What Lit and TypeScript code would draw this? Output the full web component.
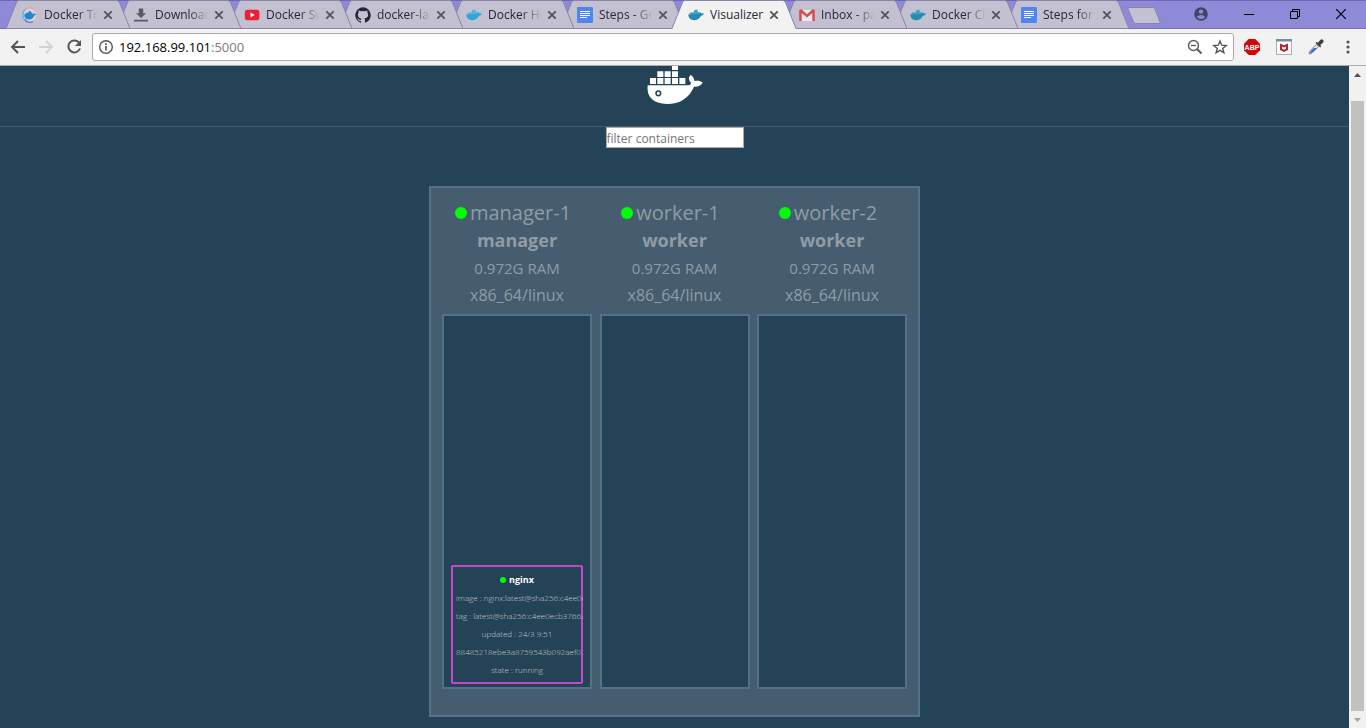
import { LitElement, html, svg, css } from "lit";
import { customElement, property, state } from "lit/decorators.js";
import { classMap } from "lit/directives/class-map.js";

interface Tab { icon: string; title: string; active?: boolean; }
interface Task { name: string; lines: string[]; }
interface SwarmNode { name: string; role: string; ram: string; platform: string; tasks: Task[]; }

const TABS: Tab[] = [
  { icon: "toolbox", title: "Docker Toolbox" },
  { icon: "download", title: "Download" },
  { icon: "youtube", title: "Docker Swarm" },
  { icon: "github", title: "docker-labs" },
  { icon: "whale", title: "Docker Hub" },
  { icon: "docs", title: "Steps - Google" },
  { icon: "whaledark", title: "Visualizer", active: true },
  { icon: "gmail", title: "Inbox - paul" },
  { icon: "whaledark", title: "Docker Cloud" },
  { icon: "docs", title: "Steps for docker" },
];

const NODES: SwarmNode[] = [
  {
    name: "manager-1", role: "manager", ram: "0.972G RAM", platform: "x86_64/linux",
    tasks: [{
      name: "nginx",
      lines: [
        "image : nginx:latest@sha256:c4ee0ecb376636",
        "tag : latest@sha256:c4ee0ecb376636",
        "updated : 24/3 9:51",
        "88485218ebe3a8759543b092aef07b",
        "state : running",
      ],
    }],
  },
  { name: "worker-1", role: "worker", ram: "0.972G RAM", platform: "x86_64/linux", tasks: [] },
  { name: "worker-2", role: "worker", ram: "0.972G RAM", platform: "x86_64/linux", tasks: [] },
];

const whale = (body: string, load: string) => svg`
  <path fill=${load} d="M6 3.300L9.300 2.600 9.800 5l1.200.3V8.500H1.800L1.500 5.800 6 5.200z"/>
  <path fill=${body} d="M.2 7.600L10.600 7c.9-.4 1.200-1.200.9-2.200 1 .4 1.500 1 1.600 1.700 1-.4 2-.3 2.800.2-.6 1.300-1.600 1.900-2.900 2-1.400 2.800-3.600 4.500-7 4.500C2.800 13.200.6 11.400.2 7.600z"/>`;

const ICONS: Record<string, unknown> = {
  toolbox: svg`
    <circle cx="8" cy="8" r="7.300" fill="#d3d5e2"/>
    <path d="M3 2.600A7.300 7.300 0 0 1 13.500 3.500" fill="none" stroke="#e8a08c" stroke-width="1.300"/>
    <path d="M13.500 3.500A7.300 7.300 0 0 1 11 14.700" fill="none" stroke="#e6b3a0" stroke-width="1.300"/>
    <path d="M11 14.700A7.300 7.300 0 0 1 2.500 12.500" fill="none" stroke="#6a6fd0" stroke-width="1.300"/>
    <path d="M2.500 12.500A7.300 7.300 0 0 1 3 2.600" fill="none" stroke="#45b5dc" stroke-width="1.300"/>
    <path fill="#1f86cf" d="M6.500 4.200h2.600v1.500h1.200v1.500h.8c.5-.3.500-1 .2-1.600.9.400 1.200 1 1.200 1.500.8-.3 1.400-.2 1.800.1-.4.800-1.100 1.100-2 1.100-.9 2.900-2.800 4.200-5.400 4.200-3 0-4.600-1.800-4.700-5.300h1.500V5.700h2.800z"/>`,
  download: svg`<path fill="#5c5868" d="M5.800 1.500h4.400v4.700H13L8 11 3 6.200h2.800zM1 12.800h14v1.700H1z"/>`,
  youtube: svg`<rect x=".8" y="2.700" width="14.600" height="10.600" rx="2.800" fill="#ec2034"/><path fill="#fff" d="M6.500 5.500v5L10.800 8z"/>`,
  github: svg`<path fill="#27213a" d="M8 .2a8 8 0 0 0-2.500 15.500c.4.1.5-.2.5-.4v-1.400c-2.200.5-2.700-1-2.700-1-.4-.9-.9-1.200-.9-1.200-.7-.5.100-.5.100-.5.800.1 1.200.8 1.200.8.7 1.200 1.900.9 2.300.7.100-.5.300-.9.500-1.100-1.800-.2-3.600-.9-3.600-4 0-.9.300-1.600.8-2.100-.1-.2-.4-1 .1-2.100 0 0 .7-.2 2.200.8a7.700 7.700 0 0 1 4 0c1.500-1 2.200-.8 2.200-.8.4 1.100.2 1.900.1 2.100.5.600.8 1.300.8 2.100 0 3.100-1.900 3.700-3.700 3.900.3.300.6.800.6 1.500v2.300c0 .2.100.5.500.4A8 8 0 0 0 8 .2z"/>`,
  whale: whale("#35a3dc", "#4fb4e2"),
  whaledark: whale("#238cb4", "#3aa5c5"),
  docs: svg`<rect width="16" height="16" rx="1" fill="#4f86ee"/><path stroke="#fff" d="M3 4.500h10M3 6.500h10M3 8.500h10M3 10.500h7"/>`,
  gmail: svg`<path fill="#eceaf0" d="M1 3h14v11H1z"/><path fill="#d84c4c" d="M1 2.600h1.800L8 7.300l5.200-4.700H15a.8.800 0 0 1 .8.800V14h-2.500V6L8 10.500 2.700 6v8H.2V3.400a.8.800 0 0 1 .8-.8z"/>`,
};

@customElement("browser-tab")
class BrowserTab extends LitElement {
  @property({ attribute: false }) tab!: Tab;

  static styles = css`
    :host { display: block; position: relative; flex: 0 1 124px; height: 29px; margin-right: -13px; min-width: 0; }
    .shape { position: absolute; inset: 0; width: 100%; height: 100%; }
    .row { position: relative; display: flex; align-items: center; height: 29px; padding: 1px 17px 0 16px; box-sizing: border-box; }
    .icon { width: 16px; height: 16px; flex: none; }
    .title { flex: 1; min-width: 0; margin: 0 5px 0 6px; padding: 0; border: 0; background: none; text-align: left; overflow: hidden; white-space: nowrap;
      font: 12px/18px "Open Sans", sans-serif; color: #28253a;
      -webkit-mask-image: linear-gradient(to right, #000 calc(100% - 20px), transparent); mask-image: linear-gradient(to right, #000 calc(100% - 20px), transparent); }
    .active .title { -webkit-mask-image: none; mask-image: none; overflow: visible; }
    .close { flex: none; width: 10px; height: 10px; padding: 0; border: 0; background: none; display: grid; }
  `;

  render() {
    const { icon, title, active } = this.tab;
    return html`
      <svg class="shape" viewBox="0 0 124 29" preserveAspectRatio="none" aria-hidden="true">
        <path d="M0 29L.5 28 10.500 2.500Q11 .5 13 .5H110.500Q112.500.5 113.500 2.500L123.500 28 124 29z" fill=${active ? "#f2f2f2" : "#c3c0d1"}/>
        <path d=${active ? "M0 28.500L10.500 2.500Q11.200.5 13 .5H110.500Q112.500.5 113.500 2.500L124 28.500" : "M0 28.500L10.500 2.500Q11.200.5 13 .5H110.500Q112.500.5 113.500 2.500L124 28.500H0"} fill="none" stroke="#8a84a8"/>
      </svg>
      <div class=${classMap({ row: true, active: !!active })}>
        <svg class="icon" viewBox="0 0 16 16" aria-hidden="true">${ICONS[icon]}</svg>
        <button class="title">${title}</button>
        <button class="close" aria-label="Close tab">
          <svg viewBox="0 0 10 10"><path d="M1.300 1.300l7.400 7.400M8.700 1.300L1.300 8.700" stroke="#55525f" stroke-width="1.800"/></svg>
        </button>
      </div>`;
  }
}

@customElement("swarm-node")
class SwarmNodeView extends LitElement {
  @property({ attribute: false }) node!: SwarmNode;
  @property() filter = "";

  static styles = css`
    :host { display: block; text-align: center; color: #8f9ca7; }
    .name { display: flex; justify-content: center; align-items: center; gap: 3px; padding-right: 8px; font-size: 20px; line-height: 26px; }
    .dot { width: 12px; height: 12px; border-radius: 50%; background: #00ff00; }
    .role { font-size: 18px; font-weight: 700; line-height: 28px; }
    .spec { font-size: 15px; line-height: 28px; }
    .spec.platform { font-size: 16px; line-height: 26px; }
    .stack { display: flex; flex-direction: column; justify-content: flex-end; box-sizing: border-box; height: 375px; margin-top: 6px; padding: 3px 7px; border: 2px solid #537188; background: #254356; }
    .task { border: 2px solid #c946c9; border-radius: 2px; padding: 4px 0 3px; }
    .task-name { display: flex; justify-content: center; align-items: center; gap: 3px; font-size: 9px; line-height: 18px; font-weight: 700; color: #fff; }
    .task-name .dot { width: 6px; height: 6px; }
    .lines { list-style: none; margin: 0 -2px; padding: 0; font-size: 8px; font-weight: 300; line-height: 18px; color: #c3ccd4; }
    .lines li { overflow: hidden; white-space: nowrap; padding: 0 5px; }
  `;

  render() {
    const n = this.node;
    const tasks = n.tasks.filter((t) => t.name.includes(this.filter));
    return html`
      <div class="name"><span class="dot"></span>${n.name}</div>
      <div class="role">${n.role}</div>
      <div class="spec">${n.ram}</div>
      <div class="spec platform">${n.platform}</div>
      <div class="stack">
        ${tasks.map((t) => html`
          <div class="task">
            <div class="task-name"><span class="dot"></span>${t.name}</div>
            <ul class="lines">${t.lines.map((l) => html`<li>${l}</li>`)}</ul>
          </div>`)}
      </div>`;
  }
}

@customElement("app-root")
class AppRoot extends LitElement {
  @state() private filter = "";

  static styles = css`
    :host { display: flex; flex-direction: column; height: 100vh; overflow: hidden; background: #254356; font-family: "Open Sans", sans-serif; }
    button { padding: 0; border: 0; background: none; display: grid; place-items: center; flex: none; }
    .strip { display: flex; height: 29px; flex: none; background: linear-gradient(#6f68ba 1px, #8e8ad8 1px, #8e8ad8 28px, #7771b0 28px); padding: 0 2px 0 6px; }
    .tabs { display: flex; flex: 0 1 1110px; min-width: 0; }
    browser-tab { z-index: var(--z); }
    .new-tab { width: 34px; height: 18px; margin: 7px 0 0 11px; }
    .window { display: flex; margin-left: auto; height: 27px; }
    .window button { width: 46px; }
    .window .profile { width: 50px; }
    .bar { display: flex; align-items: center; flex: none; height: 37px; box-sizing: border-box; padding: 0 10px 0 8px; background: #f2f2f2; border-bottom: 1px solid #aeaeae; }
    .nav { width: 20px; height: 20px; margin-right: 8px; }
    .address { display: flex; align-items: center; flex: 1; min-width: 0; height: 28px; box-sizing: border-box; border: 1px solid #aaa; border-radius: 3px; background: #fff; padding: 0 5px; }
    .url { flex: 1; min-width: 0; margin-left: 5px; font-size: 13px; line-height: 20px; color: #000; text-decoration: none; }
    .port { color: #7b7b7b; }
    .address button { width: 16px; height: 16px; }
    .address .star { margin-left: 9px; }
    .ext { width: 16px; height: 16px; }
    .exts { display: flex; gap: 16px; margin-left: 10px; }
    .body { display: flex; flex: 1; min-height: 0; }
    main { flex: 1; min-width: 0; overflow: hidden; }
    header { display: flex; justify-content: center; height: 60px; border-bottom: 1px solid #435d70; }
    .logo { width: 59px; height: 60px; }
    .search { display: flex; justify-content: center; }
    .search input { width: 138px; height: 21px; box-sizing: border-box; margin: 0; padding: 1px 0 0; border: 1px solid #a9a9a9; border-radius: 0; background: #fff; color: #333; font: 12px/18px "Open Sans", sans-serif; outline: 0; }
    .search input::placeholder { color: #757575; }
    .cluster { display: grid; grid-template-columns: repeat(3, 150px); justify-content: space-between; width: 491px; box-sizing: border-box; margin: 38px auto 0; padding: 12px 11px 26px; border: 2px solid #537188; background: #455d6e; }
    .scroll { display: flex; flex-direction: column; width: 17px; flex: none; background: #f1f1f1; }
    .scroll button { width: 17px; height: 17px; }
    .thumb { flex: 1; margin: 18px 2px 0; background: #c1c1c1; }
  `;

  render() {
    return html`
      <div class="strip">
        <div class="tabs">
          ${TABS.map((t, i) => html`<browser-tab style="--z:${t.active ? 20 : TABS.length - i}" .tab=${t}></browser-tab>`)}
        </div>
        <button class="new-tab" aria-label="New tab">
          <svg width="34" height="18" viewBox="0 0 34 18"><path d="M2 .5H26Q27.500.5 28 2L33 15Q33.500 16.500 32 16.500H8.500Q7 16.500 6.500 15L1 2Q.5.5 2 .5z" fill="#c3c0d1" stroke="#8a84a8"/></svg>
        </button>
        <div class="window">
          <button class="profile" aria-label="Profile"><svg width="14" height="14" viewBox="0 0 14 14"><circle cx="7" cy="7" r="6.800" fill="#454168"/><circle cx="7" cy="4.600" r="2.200" fill="#8e8ad8"/><path d="M2.700 9.800Q7 6.300 11.300 9.800 9.800 12 7 12T2.700 9.800z" fill="#8e8ad8"/></svg></button>
          <button aria-label="Minimize"><svg width="10" height="10" viewBox="0 0 10 10"><path d="M0 5.500h10" stroke="#000"/></svg></button>
          <button aria-label="Restore"><svg width="10" height="10" viewBox="0 0 10 10"><path d="M.5 2.500h7v7h-7zM2.500 2V.5h7v7H8" fill="none" stroke="#000"/></svg></button>
          <button aria-label="Close"><svg width="10" height="10" viewBox="0 0 10 10"><path d="M0 0l10 10M10 0L0 10" stroke="#000" stroke-width="1.200"/></svg></button>
        </div>
      </div>
      <div class="bar">
        <button class="nav" aria-label="Back"><svg width="20" height="20" viewBox="0 0 20 20"><path d="M17 10H4.500M10 4l-6 6 6 6" fill="none" stroke="#555" stroke-width="2"/></svg></button>
        <button class="nav" aria-label="Forward"><svg width="20" height="20" viewBox="0 0 20 20"><path d="M3 10h12.500M10 4l6 6-6 6" fill="none" stroke="#d2d2d2" stroke-width="2"/></svg></button>
        <button class="nav" aria-label="Reload"><svg width="20" height="20" viewBox="0 0 20 20"><path d="M15.500 6.300A6 6 0 1 0 16 11.500" fill="none" stroke="#555" stroke-width="2"/><path d="M17 3v6h-6z" fill="#555"/></svg></button>
        <div class="address">
          <svg width="16" height="16" viewBox="0 0 16 16"><circle cx="8" cy="8" r="6.300" fill="none" stroke="#555" stroke-width="1.400"/><path d="M8 7v4.500M8 4.300v1.600" stroke="#555" stroke-width="1.700"/></svg>
          <a class="url" href="#">192.168.99.101<span class="port">:5000</span></a>
          <button aria-label="Zoom"><svg width="16" height="16" viewBox="0 0 16 16"><circle cx="6.500" cy="6.500" r="5" fill="none" stroke="#5a5a5a" stroke-width="1.400"/><path d="M4 6.500h5" stroke="#5a5a5a" stroke-width="1.300"/><path d="M10 10l4.500 4.500" stroke="#5a5a5a" stroke-width="2"/></svg></button>
          <button class="star" aria-label="Bookmark"><svg width="16" height="16" viewBox="0 0 16 16"><path d="M8 2l1.700 4.200 4.500.3-3.500 2.900 1.200 4.400L8 11.300l-3.900 2.500 1.200-4.400L1.800 6.500l4.500-.3z" fill="none" stroke="#555" stroke-width="1.400"/></svg></button>
        </div>
        <div class="exts">
          <button class="ext" aria-label="Adblock Plus"><svg width="16" height="16" viewBox="0 0 16 16"><path d="M4.700 0h6.600L16 4.700v6.600L11.300 16H4.700L0 11.300V4.700z" fill="#cf0707"/><text x="8" y="11" text-anchor="middle" font-family="Liberation Sans, sans-serif" font-size="7" font-weight="700" fill="#fff">ABP</text></svg></button>
          <button class="ext" aria-label="WebAdvisor"><svg width="16" height="16" viewBox="0 0 16 16"><path d="M.5.5h15v15H.5z" fill="#fdfdfd" stroke="#a9adb0"/><path d="M0 0h16v2.500H0z" fill="#71919c"/><path d="M4 4.500l4 1.700 4-1.700v6.600L8 13l-4-1.900z" fill="#c01f2f"/><path d="M6 7.500l2 1 2-1v2.300l-2 1-2-1z" fill="#fff"/></svg></button>
          <button class="ext" aria-label="Color picker"><svg width="16" height="16" viewBox="0 0 16 16"><path d="M1 15l.8-3L8.500 5.300l2.200 2.200L4 14.200z" fill="#dfe3ee" stroke="#777" stroke-width=".8"/><path d="M2 14l.5-1.500L6 9h3l-5 4.600z" fill="#2f5fd8"/><path d="M7.500 4l1-1 1.300.7L12.500.8q1.500-1 2.600.2 1 1.200 0 2.400l-2.700 2.500.7 1.500-1 1z" fill="#3e4047"/></svg></button>
          <button class="ext" aria-label="Menu"><svg width="16" height="16" viewBox="0 0 16 16"><g fill="#555"><circle cx="8" cy="3" r="1.600"/><circle cx="8" cy="8" r="1.600"/><circle cx="8" cy="13" r="1.600"/></g></svg></button>
        </div>
      </div>
      <div class="body">
        <main>
          <header>
            <svg class="logo" viewBox="0 0 177 180" role="img" aria-label="Docker">
              <path fill="#fff" d="M15 36h18v18H15zM37 36h18v18H37zM59 36h18v18H59zM81 36h18v18H81zM103 36h18v18H103zM37 16h18v17H37zM59 16h18v17H59zM81 16h18v17H81zM81 0h18v12H81z"/>
              <path fill="#fff" d="M8 58H125C134 58 139 55 138 50 130 42 130 33 137 27 145 32 148 38 148 45 157 43 167 44 173 50 168 59 158 63 147 62 132 97 104 114 66 114 24 114 4 92 8 58z"/>
              <circle cx="40" cy="82" r="7" fill="#fff" stroke="#254356" stroke-width="4.500"/>
            </svg>
          </header>
          <div class="search">
            <input type="text" aria-label="filter containers" placeholder="filter containers" .value=${this.filter}
              @input=${(e: Event) => (this.filter = (e.target as HTMLInputElement).value)} />
          </div>
          <section class="cluster">
            ${NODES.map((n) => html`<swarm-node .node=${n} .filter=${this.filter}></swarm-node>`)}
          </section>
        </main>
        <div class="scroll">
          <button aria-label="Scroll up"><svg width="7" height="4" viewBox="0 0 7 4"><path d="M0 4L3.500 0 7 4z" fill="#505050"/></svg></button>
          <div class="thumb"></div>
          <button aria-label="Scroll down"><svg width="7" height="4" viewBox="0 0 7 4"><path d="M0 0h7L3.500 4z" fill="#a3a3a3"/></svg></button>
        </div>
      </div>`;
  }
}
